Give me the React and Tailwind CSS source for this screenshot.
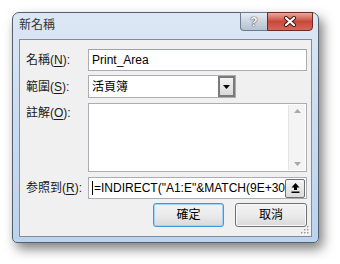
import React from 'react'

const ui = { fontFamily: '"Liberation Sans", "Noto Sans CJK TC", sans-serif' }

function Label({ text, accel, className = '' }) {
    return (
        <span className={`w-[62px] shrink-0 text-[12px] text-[#1a1a1a] leading-none ${className}`}>
            {text}(<span className="underline underline-offset-2">{accel}</span>):
        </span>
    )
}

export default function App() {
    return (
        <div className="w-[340px] h-[264px] bg-white pl-[12px] pt-[12px]" style={ui}>
            <div className="w-[307px] h-[231px] rounded-t-[7px] rounded-b-[5px] border border-[#53606e] bg-gradient-to-b from-[#dce7f4] via-[#c9dbef] to-[#bcd3ee] shadow-[4px_6px_12px_rgba(0,0,0,0.5)] flex flex-col px-[6px] pb-[5px]">
                {/* title bar */}
                <div className="h-[26px] flex items-start justify-between">
                    <span className="pt-[6px] text-[12px] leading-none text-[#333]">新名稱</span>
                    <div className="flex -mt-[1px] -mr-[1px]">
                        <div className="w-[27px] h-[19px] rounded-bl-[4px] border border-[#6d7b8c] border-r-0 bg-gradient-to-b from-[#e6ecf3] via-[#cbd5e1] to-[#b4c2d2] flex items-center justify-center">
                            <span className="text-[12px] font-bold leading-none text-white [text-shadow:0_0_1px_#1d2733,0_0_1px_#1d2733]">?</span>
                        </div>
                        <div className="w-[46px] h-[19px] rounded-br-[4px] border border-[#6b2a23] bg-gradient-to-b from-[#e7a99f] via-[#c8483a] to-[#d4665a] flex items-center justify-center">
                            <svg width="14" height="11" viewBox="0 0 14 11">
                                <path d="M3 2 L11 9 M11 2 L3 9" stroke="#3a1410" strokeWidth="4" strokeLinecap="round" />
                                <path d="M3 2 L11 9 M11 2 L3 9" stroke="#ffffff" strokeWidth="2.2" strokeLinecap="round" />
                            </svg>
                        </div>
                    </div>
                </div>

                {/* client area */}
                <div className="flex-1 border border-[#7f8d9e] bg-[#f0f0f0] pt-[9px] pl-[6px] pr-[4px] flex flex-col relative">
                    <div className="flex items-center h-[22px]">
                        <Label text="名稱" accel="N" />
                        <div className="flex-1 h-full bg-white border border-[#abadb3] border-t-[#9da2aa] flex items-center pl-[3px] text-[12px] text-black">
                            Print_Area
                        </div>
                    </div>

                    <div className="flex items-center h-[23px] mt-[4px]">
                        <Label text="範圍" accel="S" />
                        <div className="w-[148px] h-full bg-white border border-[#abadb3] flex items-center">
                            <span className="flex-1 pl-[3px] text-[12px] text-black">活頁簿</span>
                            <div className="w-[17px] h-full border-2 border-[#7a7a7a] bg-gradient-to-b from-[#f2f2f2] to-[#d9d9d9] flex items-center justify-center">
                                <svg width="7" height="4" viewBox="0 0 7 4"><path d="M0 0 H7 L3.5 4 Z" fill="#000" /></svg>
                            </div>
                        </div>
                    </div>

                    <div className="flex items-start h-[69px] mt-[5px]">
                        <Label text="註解" accel="O" className="pt-[4px]" />
                        <div className="flex-1 h-full bg-white border border-[#abadb3] flex justify-end p-[1px]">
                            <div className="w-[17px] h-full bg-[#f4f4f4] border-l border-[#e4e4e4] flex flex-col items-center justify-between py-[4px]">
                                <svg width="7" height="4" viewBox="0 0 7 4"><path d="M0 4 H7 L3.5 0 Z" fill="#a8a8a8" /></svg>
                                <svg width="7" height="4" viewBox="0 0 7 4"><path d="M0 0 H7 L3.5 4 Z" fill="#a8a8a8" /></svg>
                            </div>
                        </div>
                    </div>

                    <div className="flex items-center h-[22px] mt-[5px]">
                        <Label text="参照到" accel="R" />
                        <div className="flex-1 min-w-0 h-full bg-white border border-[#abadb3] flex items-center pr-[1px]">
                            <div className="flex-1 min-w-0 overflow-hidden whitespace-nowrap flex items-center pl-[3px] text-[12px] text-black">
                                <span className="inline-block w-[1px] h-[14px] bg-black mr-[1px] shrink-0" />
                                <span>=INDIRECT("A1:E"&amp;MATCH(9E+307,A:A))</span>
                            </div>
                            <div className="w-[20px] h-[19px] shrink-0 rounded-[2px] border border-[#707070] bg-gradient-to-b from-[#f5f5f5] to-[#dcdcdc] flex items-center justify-center">
                                <svg width="9" height="10" viewBox="0 0 9 10">
                                    <path d="M4.5 0 L8.5 4.5 H6 V7 H3 V4.5 H0.5 Z" fill="#000" />
                                    <rect x="0.5" y="8.5" width="8" height="1.5" fill="#000" />
                                </svg>
                            </div>
                        </div>
                    </div>

                    <div className="flex justify-end gap-[11px] mt-[4px]">
                        <button className="w-[71px] h-[24px] rounded-[3px] border border-[#3c9ae0] shadow-[inset_0_0_0_1px_#9fd3f7] bg-gradient-to-b from-[#f2f2f2] via-[#ebebeb] to-[#d9d9d9] text-[12px] text-black leading-none">確定</button>
                        <button className="w-[72px] h-[24px] rounded-[3px] border border-[#707070] shadow-[inset_0_0_0_1px_#fbfbfb] bg-gradient-to-b from-[#f2f2f2] via-[#ebebeb] to-[#d9d9d9] text-[12px] text-black leading-none">取消</button>
                    </div>

                    {/* size grip */}
                    <svg className="absolute right-[1px] bottom-[1px]" width="10" height="10" viewBox="0 0 10 10">
                        {[[8, 2], [8, 5], [5, 5], [8, 8], [5, 8], [2, 8]].map(([x, y], i) => (
                            <g key={i}>
                                <rect x={x} y={y} width="1.5" height="1.5" fill="#ffffff" />
                                <rect x={x - 1} y={y - 1} width="1.5" height="1.5" fill="#9a9a9a" />
                            </g>
                        ))}
                    </svg>
                </div>
            </div>
        </div>
    )
}
